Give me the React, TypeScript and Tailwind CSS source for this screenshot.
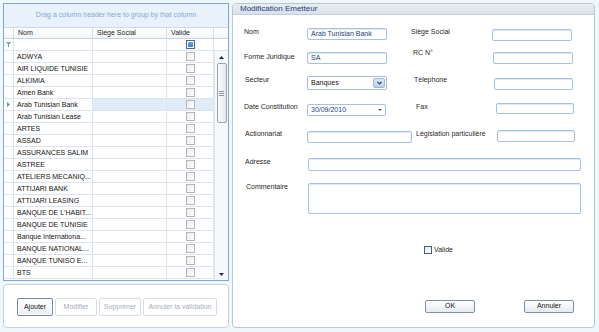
import { ReactNode } from 'react'

const emetteurs = [
  'ADWYA',
  'AIR LIQUIDE TUNISIE',
  'ALKIMIA',
  'Amen Bank',
  'Arab Tunisian Bank',
  'Arab Tunisian Lease',
  'ARTES',
  'ASSAD',
  'ASSURANCES SALIM',
  'ASTREE',
  'ATELIERS MECANIQ...',
  'ATTIJARI BANK',
  'ATTIJARI LEASING',
  "BANQUE DE L'HABIT...",
  'BANQUE DE TUNISIE',
  'Banque Internationa...',
  'BANQUE NATIONAL...',
  'BANQUE TUNISO E...',
  'BTS',
]

const SELECTED = 4

function GridCheck({ filter = false }: { filter?: boolean }) {
  if (filter) {
    return (
      <span className="block w-[9px] h-[9px] border border-[#4f6688] bg-white p-[1px]">
        <span className="block w-full h-full bg-gradient-to-b from-[#6aa8ea] to-[#2f7fd3]" />
      </span>
    )
  }
  return <span className="block w-[9px] h-[9px] border border-[#b3b7bd] bg-gradient-to-br from-[#ececec] to-white" />
}

function HeaderCell({ children, className }: { children?: ReactNode; className?: string }) {
  return (
    <div className={`h-full border-r border-[#d6dee9] flex items-center pl-[4px] ${className ?? ''}`}>{children}</div>
  )
}

function Scrollbar() {
  return (
    <div className="w-[14px] h-full flex flex-col items-center bg-[#f6f8fb] border-l border-[#e1e8f1]">
      <div className="h-[12px] flex items-center justify-center">
        <svg width="5" height="3" viewBox="0 0 5 3">
          <polygon points="0,3 5,3 2.5,0" fill="#1c2d4a" />
        </svg>
      </div>
      <div className="w-[10px] h-[60px] border border-[#9aa3b0] rounded-[2px] bg-gradient-to-r from-[#fbfbfc] to-[#e3e7ed] flex flex-col items-center justify-center gap-[1px]">
        <span className="block w-[5px] h-px bg-[#8d96a3]" />
        <span className="block w-[5px] h-px bg-[#8d96a3]" />
        <span className="block w-[5px] h-px bg-[#8d96a3]" />
      </div>
      <div className="flex-1" />
      <div className="h-[12px] flex items-center justify-center">
        <svg width="5" height="3" viewBox="0 0 5 3">
          <polygon points="0,0 5,0 2.5,3" fill="#1c2d4a" />
        </svg>
      </div>
    </div>
  )
}

function EmetteurGrid() {
  return (
    <div className="h-[278px] border border-[#86a5d1] bg-white flex flex-col overflow-hidden">
      <div className="h-[24px] shrink-0 bg-[#e9f2fc] border-b border-[#c9d8ec] flex items-center justify-center text-[#87a6d1]">
        Drag a column header here to group by that column
      </div>

      <div className="h-[11px] shrink-0 flex border-b border-[#c7d3e3] bg-gradient-to-b from-white to-[#f3f6fa] text-[#1e1e1e]">
        <HeaderCell className="w-[10px] pl-0" />
        <HeaderCell className="w-[79px]">Nom</HeaderCell>
        <HeaderCell className="w-[74px]">Siége Social</HeaderCell>
        <HeaderCell className="w-[47px]">Valide</HeaderCell>
        <div className="w-[14px]" />
      </div>

      <div className="h-[12px] shrink-0 flex border-b border-[#dde4ee]">
        <div className="w-[10px] h-full border-r border-[#dde4ee] flex items-center justify-center">
          <svg width="5" height="5" viewBox="0 0 5 5">
            <polygon points="0,0 5,0 3,2.5 3,5 2,5 2,2.5" fill="#6f9bd4" />
          </svg>
        </div>
        <div className="w-[79px] h-full border-r border-[#dde4ee]" />
        <div className="w-[74px] h-full border-r border-[#dde4ee]" />
        <div className="w-[47px] h-full border-r border-[#dde4ee] flex items-center justify-center">
          <GridCheck filter />
        </div>
        <div className="w-[14px]" />
      </div>

      <div className="flex-1 flex min-h-0">
        <div className="w-[210px] flex flex-col">
          {emetteurs.map((name, i) => {
            const selected = i === SELECTED
            return (
              <div key={name} className="h-[12px] shrink-0 flex border-b border-[#dde4ee] text-[#141414]">
                <div className="w-[10px] h-full border-r border-[#dde4ee] flex items-center justify-center">
                  {selected && (
                    <svg width="3" height="5" viewBox="0 0 3 5">
                      <polygon points="0,0 3,2.5 0,5" fill="#5b8ed0" />
                    </svg>
                  )}
                </div>
                <div className="w-[79px] h-full border-r border-[#dde4ee] flex items-center pt-[2px] pl-[3px] whitespace-nowrap overflow-hidden">
                  {name}
                </div>
                <div className={`w-[74px] h-full border-r border-[#dde4ee] ${selected ? 'bg-[#e1ecf9]' : ''}`} />
                <div
                  className={`w-[47px] h-full border-r border-[#dde4ee] flex items-center justify-center ${selected ? 'bg-[#e1ecf9]' : ''}`}
                >
                  <GridCheck />
                </div>
              </div>
            )
          })}
        </div>
        <Scrollbar />
      </div>
    </div>
  )
}

function ToolButton({ children, width, disabled = false }: { children: ReactNode; width: string; disabled?: boolean }) {
  return (
    <button
      className={`${width} h-[18px] rounded-[2px] border flex items-center justify-center ${
        disabled
          ? 'border-[#d7dde5] bg-white text-[#a6aeb8]'
          : 'border-[#7486a2] bg-gradient-to-b from-white to-[#eaeef4] text-[#121212] shadow-[inset_0_0_0_1px_#ffffff]'
      }`}
    >
      {children}
    </button>
  )
}

function ActionsPanel() {
  return (
    <div className="h-[44px] rounded-[4px] border border-[#c9d1db] bg-white flex items-center pl-[13px] gap-[2px] pt-[2px]">
      <ToolButton width="w-[36px]">Ajouter</ToolButton>
      <ToolButton width="w-[42px]" disabled>
        Modifier
      </ToolButton>
      <ToolButton width="w-[42px]" disabled>
        Supprimer
      </ToolButton>
      <ToolButton width="w-[74px]" disabled>
        Annuler la validation
      </ToolButton>
    </div>
  )
}

function Label({ children, className }: { children: ReactNode; className?: string }) {
  return <span className={`leading-[8px] whitespace-nowrap text-[#1f1f1f] shrink-0 ${className ?? ''}`}>{children}</span>
}

function TextBox({ className, value }: { className: string; value?: string }) {
  return (
    <div
      className={`shrink-0 border border-[#a7c0e4] rounded-[2px] bg-white flex items-center pl-[3px] text-[#243d73] shadow-[inset_0_1px_1px_rgba(160,190,230,0.35)] ${className}`}
    >
      {value}
    </div>
  )
}

function SecteurCombo() {
  return (
    <div className="w-[80px] h-[14px] shrink-0 border border-[#a7bcd8] rounded-[2px] bg-white flex items-stretch">
      <span className="flex-1 flex items-center pl-[3px] text-[#141414]">Banques</span>
      <span className="w-[12px] my-[1px] mr-[1px] rounded-[2px] bg-gradient-to-b from-[#dce8f7] to-[#bcd0ea] border border-[#9fb6d6] flex items-center justify-center">
        <svg width="5" height="4" viewBox="0 0 5 4">
          <polyline points="0.5,0.8 2.5,2.8 4.5,0.8" fill="none" stroke="#24406e" strokeWidth="1.2" />
        </svg>
      </span>
    </div>
  )
}

function DateBox() {
  return (
    <div className="w-[79px] h-[12px] mt-[1px] shrink-0 border border-[#a7c0e4] rounded-[2px] bg-white flex items-center pl-[3px] pr-[3px] text-[#233f8a]">
      <span className="flex-1">30/09/2010</span>
      <svg width="4" height="2" viewBox="0 0 4 2">
        <polygon points="0,0 4,0 2,2" fill="#4a5a74" />
      </svg>
    </div>
  )
}

function DialogButton({ children, className }: { children: ReactNode; className?: string }) {
  return (
    <button
      className={`w-[50px] h-[13px] shrink-0 rounded-[2px] border border-[#8290a6] bg-gradient-to-b from-white to-[#e6eaf1] text-[#141414] flex items-center justify-center ${className ?? ''}`}
    >
      {children}
    </button>
  )
}

function EmetteurForm() {
  return (
    <div className="w-[363px] h-[325px] rounded-[4px] border border-[#bcc4cf] bg-white flex flex-col overflow-hidden">
      <div className="h-[11px] shrink-0 bg-gradient-to-b from-[#e8ecf3] to-[#dbe1ea] border-b border-[#c6cdd8] flex items-center pl-[7px] text-[8px] text-[#1c3a78]">
        Modification Emetteur
      </div>

      <div className="flex flex-col">
        <div className="flex items-start h-[12px] mt-[13px]">
          <Label className="ml-[11px] w-[63px]">Nom</Label>
          <TextBox className="w-[80px] h-[12px]" value="Arab Tunisian Bank" />
          <Label className="ml-[24px] w-[81px]">Siège Social</Label>
          <TextBox className="w-[80px] h-[12px] mt-[1px]" />
        </div>

        <div className="flex items-start h-[12px] mt-[12px]">
          <Label className="ml-[11px] w-[63px] mt-[1px]">Forme Juridique</Label>
          <TextBox className="w-[80px] h-[12px]" value="SA" />
          <Label className="ml-[26px] w-[80px] -mt-[3px]">RC N°</Label>
          <TextBox className="w-[80px] h-[12px]" />
        </div>

        <div className="flex items-start h-[14px] mt-[12px]">
          <Label className="ml-[12px] w-[62px]">Secteur</Label>
          <SecteurCombo />
          <Label className="ml-[27px] w-[80px]">Télephone</Label>
          <TextBox className="w-[79px] h-[12px] mt-[2px]" />
        </div>

        <div className="flex items-start h-[13px] mt-[13px]">
          <Label className="ml-[11px] w-[63px]">Date Constitution</Label>
          <DateBox />
          <Label className="ml-[30px] w-[80px]">Fax</Label>
          <TextBox className="w-[78px] h-[11px]" />
        </div>

        <div className="flex items-start h-[13px] mt-[14px]">
          <Label className="ml-[12px] w-[62px]">Actionnariat</Label>
          <TextBox className="w-[105px] h-[12px] mt-[1px]" />
          <Label className="ml-[4px] w-[81px]">Législation particulière</Label>
          <TextBox className="w-[78px] h-[12px]" />
        </div>

        <div className="flex items-start h-[13px] mt-[15px]">
          <Label className="ml-[12px] w-[63px]">Adresse</Label>
          <TextBox className="w-[273px] h-[13px]" />
        </div>

        <div className="flex items-start h-[31px] mt-[12px]">
          <Label className="ml-[13px] w-[62px]">Commentaire</Label>
          <TextBox className="w-[273px] h-[31px]" />
        </div>

        <div className="flex items-center h-[8px] mt-[32px] ml-[191px]">
          <span className="block w-[8px] h-[8px] border border-[#3f5f8c] bg-gradient-to-br from-[#e9e9e9] to-white" />
          <span className="ml-[2px] text-[#1f1f1f]">Valide</span>
        </div>

        <div className="flex items-start h-[13px] mt-[46px]">
          <DialogButton className="ml-[192px]">OK</DialogButton>
          <DialogButton className="ml-[49px]">Annuler</DialogButton>
        </div>
      </div>
    </div>
  )
}

export default function App() {
  return (
    <div className="w-[599px] h-[332px] overflow-hidden bg-[#eef7fa] pl-[3px] pt-[3px] flex gap-[3px] text-[7px] font-['Liberation_Sans',Arial,sans-serif]">
      <div className="w-[226px] flex flex-col gap-[3px]">
        <EmetteurGrid />
        <ActionsPanel />
      </div>
      <EmetteurForm />
    </div>
  )
}
